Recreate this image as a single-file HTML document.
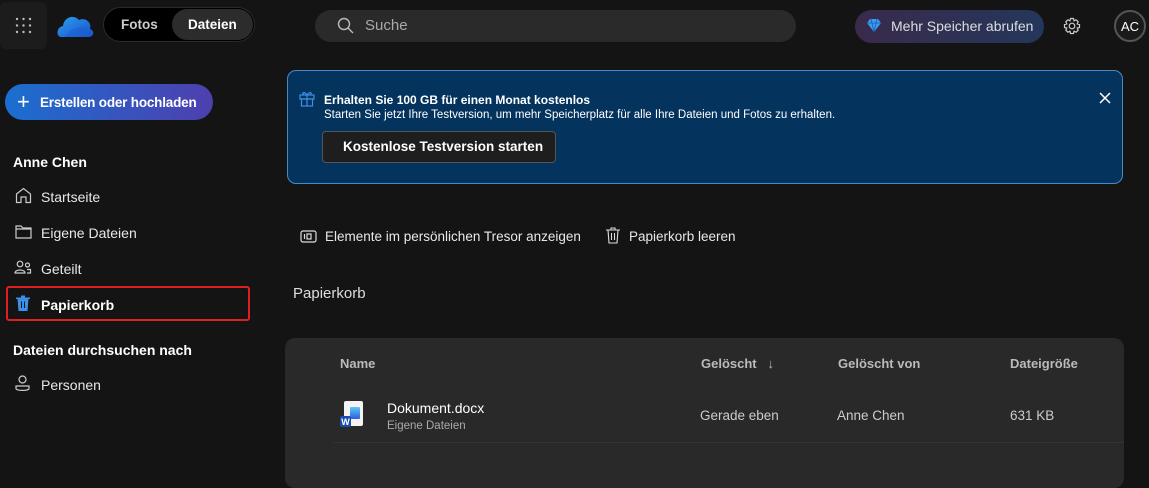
<!DOCTYPE html>
<html><head><meta charset="utf-8"><style>
*{box-sizing:border-box;margin:0;padding:0}
body{width:1149px;height:475px;background:#141414;font-family:"Liberation Sans",sans-serif;color:#e8e8e8;position:relative;overflow:hidden}
.abs{position:absolute}
.t{font-size:14px;white-space:nowrap}
</style></head><body>
<div class="abs" style="left:0;top:2px;width:47px;height:47px;background:#1c1c1c;border-radius:6px"></div>
<svg class="abs" style="left:15px;top:17px" width="17" height="17"><g fill="#bbb"><circle cx="2" cy="2" r="1.2"/><circle cx="8.5" cy="2" r="1.2"/><circle cx="15" cy="2" r="1.2"/><circle cx="2" cy="8.5" r="1.2"/><circle cx="8.5" cy="8.5" r="1.2"/><circle cx="15" cy="8.5" r="1.2"/><circle cx="2" cy="15" r="1.2"/><circle cx="8.5" cy="15" r="1.2"/><circle cx="15" cy="15" r="1.2"/></g></svg>
<svg class="abs" style="left:57px;top:13px" width="37" height="25"><defs><linearGradient id="c" x1="0" y1="0" x2="1" y2="1"><stop offset="0" stop-color="#2aa0f0"/><stop offset="1" stop-color="#1a4fc8"/></linearGradient></defs><path d="M4 24 C-1 24 -1 14 6 13 C7 4 17 1 22 7 C28 4 35 9 33 16 C38 18 37 24 31 24 Z" fill="url(#c)"/><path d="M8 24 C14 14 24 12 33 16 C38 18 37 24 31 24 Z" fill="#1d5fd0" opacity="0.6"/></svg>
<div class="abs" style="left:103px;top:7px;width:152px;height:35px;background:#000;border-radius:18px;border:1px solid #2a2a2a"></div>
<div class="abs t" style="left:121px;top:17px;color:#ccc;font-weight:bold;font-size:13.5px">Fotos</div>
<div class="abs" style="left:172px;top:9px;width:81px;height:31px;background:#2c2c2c;border-radius:16px"></div>
<div class="abs t" style="left:188px;top:17px;color:#fff;font-weight:bold;font-size:13.5px">Dateien</div>
<div class="abs" style="left:315px;top:10px;width:481px;height:32px;background:#2a2a2a;border-radius:16px"></div>
<svg class="abs" style="left:337px;top:17px" width="17" height="17" fill="none" stroke="#bbb" stroke-width="1.4"><circle cx="7" cy="7" r="5.5"/><path d="M11 11 L16 16"/></svg>
<div class="abs t" style="left:365px;top:17px;color:#aaa;font-size:15px">Suche</div>
<div class="abs" style="left:855px;top:10px;width:189px;height:33px;border-radius:17px;background:linear-gradient(90deg,#3a2a4c,#23375a)"></div>
<svg class="abs" style="left:866px;top:18px" width="16" height="15"><path d="M4 1 H12 L15 5 L8 14 L1 5 Z" fill="#3b9bf0"/><path d="M1 5 H15 M5 1 L6 5 L8 14 M11 1 L10 5 L8 14" stroke="#1a5fb0" stroke-width="0.8" fill="none"/></svg>
<div class="abs t" style="left:891px;top:18px;color:#ddd">Mehr Speicher abrufen</div>
<svg class="abs" style="left:1063px;top:17px" width="18" height="18" fill="none" stroke="#ccc" stroke-width="1.2"><circle cx="9" cy="9" r="2.8"/><path d="M7.5 1.5 H10.5 L11 3.8 L13.2 2.8 L15.2 4.8 L14.2 7 L16.5 7.5 V10.5 L14.2 11 L15.2 13.2 L13.2 15.2 L11 14.2 L10.5 16.5 H7.5 L7 14.2 L4.8 15.2 L2.8 13.2 L3.8 11 L1.5 10.5 V7.5 L3.8 7 L2.8 4.8 L4.8 2.8 L7 3.8 Z"/></svg>
<div class="abs" style="left:1114px;top:10px;width:32px;height:32px;border-radius:50%;border:2px solid #555;background:#1a1a1a"></div>
<div class="abs t" style="left:1121px;top:19px;color:#fff;font-size:13px">AC</div>
<div class="abs" style="left:5px;top:84px;width:208px;height:36px;border-radius:18px;background:linear-gradient(90deg,#1a6fd0,#4e3fae)"></div>
<div class="abs" style="left:17px;top:92px;color:#fff;font-size:22px;line-height:20px">+</div>
<div class="abs t" style="left:40px;top:95px;color:#fff;font-weight:bold;font-size:13.5px;letter-spacing:-0.2px">Erstellen oder hochladen</div>
<div class="abs t" style="left:13px;top:154px;font-weight:bold;color:#fff">Anne Chen</div>
<svg class="abs" style="left:15px;top:187px" width="17" height="17" fill="none" stroke="#ccc" stroke-width="1.2"><path d="M1.5 7 L8.5 1.5 L15.5 7 V15.5 H11 V10 H6 V15.5 H1.5 Z"/></svg>
<div class="abs t" style="left:41px;top:189px">Startseite</div>
<svg class="abs" style="left:15px;top:224px" width="17" height="15" fill="none" stroke="#ccc" stroke-width="1.2"><path d="M1 2 H6 L8 4 H16 V14 H1 Z M1 5 H16"/></svg>
<div class="abs t" style="left:41px;top:225px">Eigene Dateien</div>
<svg class="abs" style="left:14px;top:260px" width="18" height="15" fill="none" stroke="#ccc" stroke-width="1.2"><circle cx="6" cy="4" r="2.8"/><path d="M1 13 C1 9 11 9 11 13 Z"/><circle cx="13.5" cy="5" r="2"/><path d="M13 9.5 H16.5 V13 H13"/></svg>
<div class="abs t" style="left:41px;top:261px">Geteilt</div>
<div class="abs" style="left:6px;top:286px;width:244px;height:35px;border:2px solid #e02020;border-radius:3px"></div>
<svg class="abs" style="left:15px;top:295px" width="16" height="17"><path d="M1 2.5 H15 V4 H13.5 L12.5 16 H3.5 L2.5 4 H1 Z M6 0.5 H10 V2.5 H6 Z" fill="#3d8fe8"/><path d="M6.5 6.5 V13 M9.5 6.5 V13" stroke="#141414" stroke-width="1"/></svg>
<div class="abs t" style="left:41px;top:297px;font-weight:bold;color:#fff">Papierkorb</div>
<div class="abs t" style="left:13px;top:342px;font-weight:bold;color:#fff">Dateien durchsuchen nach</div>
<svg class="abs" style="left:15px;top:375px" width="15" height="17" fill="none" stroke="#ccc" stroke-width="1.2"><circle cx="7.5" cy="4.5" r="3.5"/><path d="M1 11 H14 V13.5 C14 16 1 16 1 13.5 Z"/></svg>
<div class="abs t" style="left:41px;top:377px">Personen</div>
<div class="abs" style="left:287px;top:70px;width:836px;height:114px;background:#04345e;border:1px solid #4a8ac4;border-radius:9px"></div>
<svg class="abs" style="left:299px;top:90px" width="16" height="17" fill="none" stroke="#3d8fe8" stroke-width="1.2"><rect x="1" y="5" width="14" height="4"/><rect x="2.5" y="9" width="11" height="7"/><path d="M8 5 V16 M8 5 C5 1 2 3 5 5 M8 5 C11 1 14 3 11 5"/></svg>
<div class="abs" style="left:324px;top:93px;font-size:12px;font-weight:bold;color:#fff">Erhalten Sie 100 GB für einen Monat kostenlos</div>
<div class="abs" style="left:324px;top:109px;font-size:11.5px;color:#fff;white-space:nowrap">Starten Sie jetzt Ihre Testversion, um mehr Speicherplatz für alle Ihre Dateien und Fotos zu erhalten.</div>
<div class="abs" style="left:322px;top:131px;width:234px;height:32px;background:#1e1e1e;border:1px solid #555;border-radius:4px"></div>
<div class="abs t" style="left:343px;top:139px;font-weight:bold;color:#fff;font-size:13.5px">Kostenlose Testversion starten</div>
<svg class="abs" style="left:1099px;top:92px" width="12" height="12" stroke="#fff" stroke-width="1.5"><path d="M1 1 L11 11 M11 1 L1 11"/></svg>
<svg class="abs" style="left:300px;top:230px" width="17" height="13" fill="none" stroke="#ddd" stroke-width="1.2"><rect x="1" y="1" width="15" height="11" rx="2"/><rect x="7" y="4" width="4" height="5"/><path d="M4.5 4 V9"/></svg>
<div class="abs t" style="left:325px;top:229px;font-size:13.5px">Elemente im persönlichen Tresor anzeigen</div>
<svg class="abs" style="left:605px;top:227px" width="16" height="17" fill="none" stroke="#ddd" stroke-width="1.1"><path d="M1 3 H15 M6 3 V1 H10 V3 M3 3 L4 16 H12 L13 3 M6.5 6 V13 M9.5 6 V13"/></svg>
<div class="abs t" style="left:629px;top:229px;font-size:13.5px">Papierkorb leeren</div>
<div class="abs" style="left:293px;top:285px;font-size:15px;color:#ddd">Papierkorb</div>
<div class="abs" style="left:285px;top:338px;width:839px;height:150px;background:#292929;border-radius:10px"></div>
<div class="abs t" style="left:340px;top:356px;font-weight:bold;color:#bbb;font-size:13px">Name</div>
<div class="abs t" style="left:701px;top:356px;font-weight:bold;color:#bbb;font-size:13px">Gelöscht &nbsp;&nbsp;<span style="font-weight:normal">↓</span></div>
<div class="abs t" style="left:838px;top:356px;font-weight:bold;color:#bbb;font-size:13px">Gelöscht von</div>
<div class="abs t" style="left:1010px;top:356px;font-weight:bold;color:#bbb;font-size:13px">Dateigröße</div>
<svg class="abs" style="left:339px;top:400px" width="28" height="30"><rect x="5" y="1" width="19" height="25" rx="2" fill="#f4f4f4"/><defs><linearGradient id="w" x1="0" y1="0" x2="0" y2="1"><stop offset="0" stop-color="#5cc8f8"/><stop offset="1" stop-color="#2a5fe0"/></linearGradient></defs><rect x="11" y="7" width="10" height="12" rx="1" fill="url(#w)"/><rect x="1" y="16" width="11" height="11" rx="2" fill="#1a4bb0"/><text x="2.3" y="25" font-size="9" font-weight="bold" fill="#fff" font-family="Liberation Sans">W</text></svg>
<div class="abs t" style="left:387px;top:400px;color:#fff">Dokument.docx</div>
<div class="abs" style="left:387px;top:420px;font-size:11.5px;color:#aaa">Eigene Dateien</div>
<div class="abs t" style="left:700px;top:408px;color:#ccc;font-size:13.5px">Gerade eben</div>
<div class="abs t" style="left:837px;top:408px;color:#ccc;font-size:13.5px">Anne Chen</div>
<div class="abs t" style="left:1010px;top:408px;color:#ccc;font-size:13.5px">631 KB</div>
<div class="abs" style="left:334px;top:442px;width:790px;height:1px;background:#333"></div>
</body></html>
